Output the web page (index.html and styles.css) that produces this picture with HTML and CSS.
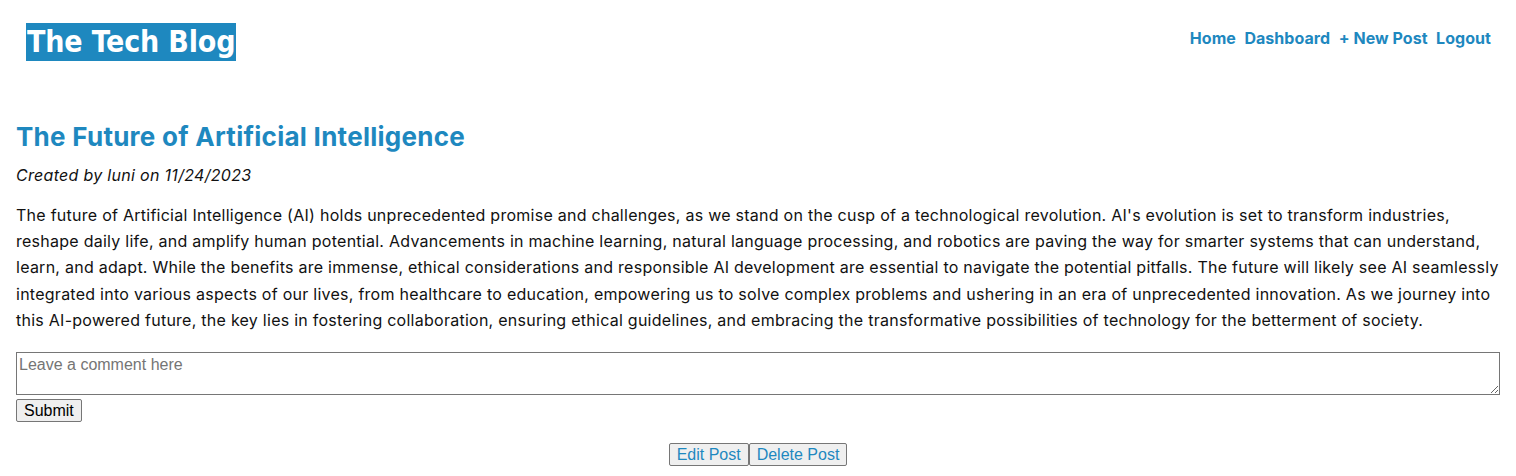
FILE: index.html
```html
<!DOCTYPE html>
<html>
<head>
<meta charset="utf-8">
<title>The Tech Blog</title>
<link rel="stylesheet" href="styles.css">
</head>
<body>
<header class="site-header">
  <h1 class="logo"><a href="#">The Tech Blog</a></h1>
  <nav class="nav">
    <a href="#">Home</a>
    <a href="#">Dashboard</a>
    <a href="#">+ New Post</a>
    <a href="#">Logout</a>
  </nav>
</header>
<main class="main">
  <article class="post">
    <h2 class="post-title">The Future of Artificial Intelligence</h2>
    <p class="post-meta">Created by luni on 11/24/2023</p>
    <p class="post-body">The future of Artificial Intelligence (AI) holds unprecedented promise and challenges, as we stand on the cusp of a technological revolution. AI's evolution is set to transform industries, reshape daily life, and amplify human potential. Advancements in machine learning, natural language processing, and robotics are paving the way for smarter systems that can understand, learn, and adapt. While the benefits are immense, ethical considerations and responsible AI development are essential to navigate the potential pitfalls. The future will likely see AI seamlessly integrated into various aspects of our lives, from healthcare to education, empowering us to solve complex problems and ushering in an era of unprecedented innovation. As we journey into this AI-powered future, the key lies in fostering collaboration, ensuring ethical guidelines, and embracing the transformative possibilities of technology for the betterment of society.</p>
  </article>
  <form class="comment-form">
    <textarea class="comment-input" placeholder="Leave a comment here"></textarea>
    <button type="button" class="btn">Submit</button>
  </form>
  <div class="post-actions">
    <button type="button" class="btn btn-link">Edit Post</button><button type="button" class="btn btn-link">Delete Post</button>
  </div>
</main>
</body>
</html>
```
FILE: styles.css
```css
html, body {
  margin: 0;
  padding: 0;
  background: #fff;
}
body {
  font-family: Inter, "Liberation Sans", sans-serif;
  color: #111;
}
.site-header {
  display: flex;
  justify-content: space-between;
  align-items: flex-start;
  padding: 23px 25px 0 26px;
  height: 93px;
  box-sizing: border-box;
}
.logo {
  margin: 0;
  font-family: "DejaVu Sans Condensed", "DejaVu Sans", Verdana, sans-serif;
  font-weight: bold;
  font-size: 30px;
  line-height: 38px;
  letter-spacing: -0.15px;
}
.logo a {
  display: block;
  background: #1e88bf;
  color: #fff;
  text-decoration: none;
  padding: 0 1px;
}
.nav {
  display: flex;
  gap: 8.5px;
  padding-top: 5px;
}
.nav a {
  color: #1e88bf;
  font-weight: bold;
  font-size: 16px;
  line-height: 20px;
  letter-spacing: 0.05px;
  text-decoration: none;
}
.main {
  padding: 0 16px;
}
.post-title {
  margin: 28px 0 0;
  font-size: 26px;
  line-height: 32px;
  font-weight: bold;
  letter-spacing: 0.27px;
  color: #1e88bf;
}
.post-meta {
  margin: 10px 0 0;
  font-style: italic;
  font-size: 16px;
  line-height: 24px;
  letter-spacing: 0.3px;
}
.post-body {
  margin: 15px 0 0;
  font-size: 16px;
  line-height: 26.2px;
  letter-spacing: 0.26px;
}
.comment-form {
  margin-top: 19px;
  display: flex;
  flex-direction: column;
  align-items: flex-start;
}
.comment-input {
  width: 100%;
  box-sizing: border-box;
  height: 43px;
  font-family: "Liberation Sans", Arial, sans-serif;
  font-size: 16px;
  padding: 3px 2px 2px;
  border: 1px solid #767676;
  margin: 0 0 4px;
  display: block;
}
.comment-input::placeholder {
  color: #757575;
}
.btn {
  font-family: "Liberation Sans", Arial, sans-serif;
  font-size: 16px;
  line-height: 19px;
  padding: 1px 7px;
  background: #efefef;
  border: 1px solid #767676;
  border-radius: 2px;
  color: #000;
  box-sizing: border-box;
}
.post-actions {
  display: flex;
  justify-content: center;
  margin-top: 21px;
}
.btn-link {
  color: #1e88bf;
}
```
